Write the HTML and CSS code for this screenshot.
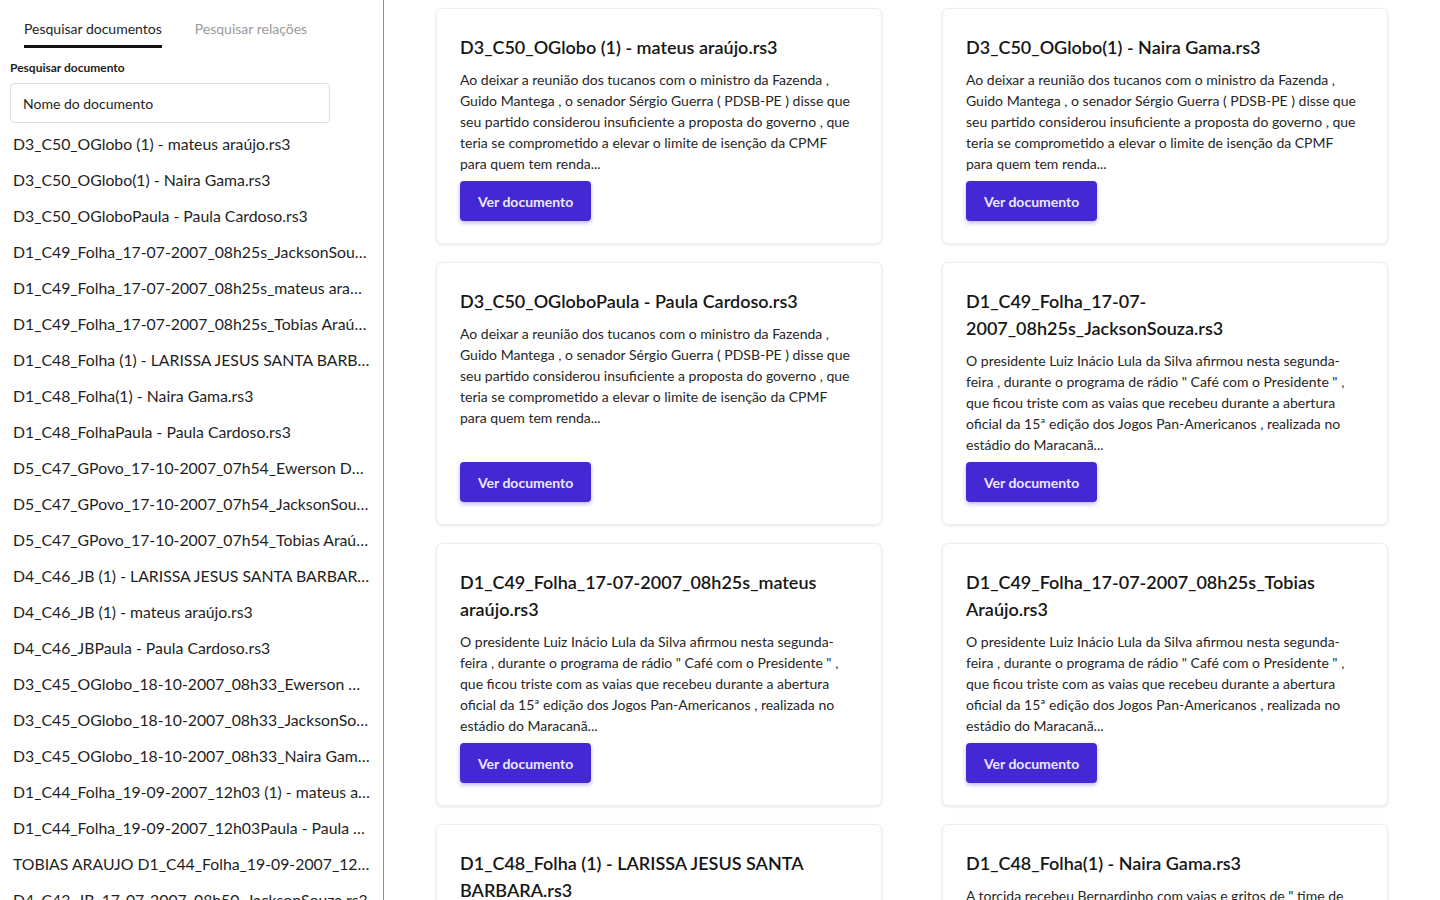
FILE: index.html
```html
<!DOCTYPE html>
<html lang="pt-BR">
<head>
    <meta charset="UTF-8">
    <meta name="viewport" content="width=device-width, initial-scale=1.0">
    <title>Documentos</title>
    <link rel="stylesheet" href="styles.css">
</head>
<body>

<aside class="sidebar">
    <div class="tabs">
        <span class="tab active">Pesquisar documentos</span>
        <span class="tab">Pesquisar relações</span>
    </div>

    <label class="search-label" for="doc-search">Pesquisar documento</label>
    <input class="search-input" id="doc-search" type="text" placeholder="Nome do documento">

    <ul class="doc-list">
        <li>D3_C50_OGlobo (1) - mateus araújo.rs3</li>
        <li>D3_C50_OGlobo(1) - Naira Gama.rs3</li>
        <li>D3_C50_OGloboPaula - Paula Cardoso.rs3</li>
        <li>D1_C49_Folha_17-07-2007_08h25s_JacksonSouza.rs3</li>
        <li>D1_C49_Folha_17-07-2007_08h25s_mateus araújo.rs3</li>
        <li>D1_C49_Folha_17-07-2007_08h25s_Tobias Araújo.rs3</li>
        <li>D1_C48_Folha (1) - LARISSA JESUS SANTA BARBARA.rs3</li>
        <li>D1_C48_Folha(1) - Naira Gama.rs3</li>
        <li>D1_C48_FolhaPaula - Paula Cardoso.rs3</li>
        <li>D5_C47_GPovo_17-10-2007_07h54_Ewerson Dantas.rs3</li>
        <li>D5_C47_GPovo_17-10-2007_07h54_JacksonSouza.rs3</li>
        <li>D5_C47_GPovo_17-10-2007_07h54_Tobias Araújo.rs3</li>
        <li>D4_C46_JB (1) - LARISSA JESUS SANTA BARBARA.rs3</li>
        <li>D4_C46_JB (1) - mateus araújo.rs3</li>
        <li>D4_C46_JBPaula - Paula Cardoso.rs3</li>
        <li>D3_C45_OGlobo_18-10-2007_08h33_Ewerson Dantas.rs3</li>
        <li>D3_C45_OGlobo_18-10-2007_08h33_JacksonSouza.rs3</li>
        <li>D3_C45_OGlobo_18-10-2007_08h33_Naira Gama.rs3</li>
        <li>D1_C44_Folha_19-09-2007_12h03 (1) - mateus araújo.rs3</li>
        <li>D1_C44_Folha_19-09-2007_12h03Paula - Paula Cardoso.rs3</li>
        <li>TOBIAS ARAUJO D1_C44_Folha_19-09-2007_12h03.rs3</li>
        <li>D4_C43_JB_17-07-2007_08h50_JacksonSouza.rs3</li>
    </ul>
</aside>

<main class="content">
    <div class="card-grid">
        <div class="card">
            <h3>D3_C50_OGlobo (1) - mateus araújo.rs3</h3>
            <p>Ao deixar a reunião dos tucanos com o ministro da Fazenda , Guido Mantega , o senador Sérgio Guerra ( PDSB-PE ) disse que seu partido considerou insuficiente a proposta do governo , que teria se comprometido a elevar o limite de isenção da CPMF para quem tem renda...</p>
            <button class="btn">Ver documento</button>
        </div>
        <div class="card">
            <h3>D3_C50_OGlobo(1) - Naira Gama.rs3</h3>
            <p>Ao deixar a reunião dos tucanos com o ministro da Fazenda , Guido Mantega , o senador Sérgio Guerra ( PDSB-PE ) disse que seu partido considerou insuficiente a proposta do governo , que teria se comprometido a elevar o limite de isenção da CPMF para quem tem renda...</p>
            <button class="btn">Ver documento</button>
        </div>
        <div class="card">
            <h3>D3_C50_OGloboPaula - Paula Cardoso.rs3</h3>
            <p>Ao deixar a reunião dos tucanos com o ministro da Fazenda , Guido Mantega , o senador Sérgio Guerra ( PDSB-PE ) disse que seu partido considerou insuficiente a proposta do governo , que teria se comprometido a elevar o limite de isenção da CPMF para quem tem renda...</p>
            <button class="btn">Ver documento</button>
        </div>
        <div class="card">
            <h3>D1_C49_Folha_17-07-2007_08h25s_JacksonSouza.rs3</h3>
            <p>O presidente Luiz Inácio Lula da Silva afirmou nesta segunda-feira , durante o programa de rádio " Café com o Presidente " , que ficou triste com as vaias que recebeu durante a abertura oficial da 15ª edição dos Jogos Pan-Americanos , realizada no estádio do Maracanã...</p>
            <button class="btn">Ver documento</button>
        </div>
        <div class="card">
            <h3>D1_C49_Folha_17-07-2007_08h25s_mateus araújo.rs3</h3>
            <p>O presidente Luiz Inácio Lula da Silva afirmou nesta segunda-feira , durante o programa de rádio " Café com o Presidente " , que ficou triste com as vaias que recebeu durante a abertura oficial da 15ª edição dos Jogos Pan-Americanos , realizada no estádio do Maracanã...</p>
            <button class="btn">Ver documento</button>
        </div>
        <div class="card">
            <h3>D1_C49_Folha_17-07-2007_08h25s_Tobias Araújo.rs3</h3>
            <p>O presidente Luiz Inácio Lula da Silva afirmou nesta segunda-feira , durante o programa de rádio " Café com o Presidente " , que ficou triste com as vaias que recebeu durante a abertura oficial da 15ª edição dos Jogos Pan-Americanos , realizada no estádio do Maracanã...</p>
            <button class="btn">Ver documento</button>
        </div>
        <div class="card">
            <h3>D1_C48_Folha (1) - LARISSA JESUS SANTA BARBARA.rs3</h3>
            <p>A torcida recebeu Bernardinho com vaias e gritos de " time de m... " durante a apresentação da seleção masculina de vôlei...</p>
            <button class="btn">Ver documento</button>
        </div>
        <div class="card">
            <h3>D1_C48_Folha(1) - Naira Gama.rs3</h3>
            <p>A torcida recebeu Bernardinho com vaias e gritos de " time de m... " durante a apresentação da seleção masculina de vôlei...</p>
            <button class="btn">Ver documento</button>
        </div>
    </div>
</main>

</body>
</html>
```

FILE: styles.css
```css
body {
    font-family: Lato, "Noto Sans", sans-serif;
    margin: 0;
    display: flex;
    align-items: flex-start;
    background: #fff;
    color: #1e1e1e;
}

/* left column with tabs, search box and the document names */
.sidebar {
    width: 363px;
    flex-shrink: 0;
    padding: 8px 10px 0 10px;
    border-right: 1px solid #22c1b1;
    min-height: 100vh;
}
.tabs {
    display: flex;
}
.tab {
    font-size: 14px;
    margin: 0 16px 0 14px;
    padding: 12px 0 8px;
    color: #9a9a9a;
    border-bottom: 3px solid transparent;
    cursor: pointer;
}
.tab.active {
    color: #1e1e1e;
    border-bottom-color: #111;
}
.tab + .tab {
    margin-left: 17px;
}
.search-label {
    display: block;
    font-size: 12px;
    font-weight: bold;
    margin-top: 12px;
}
.search-input {
    display: block;
    box-sizing: border-box;
    width: 320px;
    height: 40px;
    margin-top: 8px;
    padding: 0 12px;
    font-family: inherit;
    font-size: 14px;
    border: 1px solid #ddd;
    border-radius: 4px;
    outline: none;
}
.search-input::placeholder {
    color: #1e1e1e;
}
.doc-list {
    list-style: none;
    margin: 3px 0 0;
    padding: 0;
}
.doc-list li {
    font-size: 15.8px;
    line-height: 24px;
    padding: 6px 3px;
    white-space: nowrap;
    overflow: hidden;
    text-overflow: ellipsis;
    cursor: pointer;
}

/* document cards */
.content {
    flex: 1;
    padding: 8px 52px;
}
.card-grid {
    display: grid;
    grid-template-columns: 1fr 1fr;
    gap: 18px 60px;
}
.card {
    display: flex;
    flex-direction: column;
    align-items: flex-start;
    padding: 25px 25px 22px 23px;
    border: 1px solid #eee;
    border-radius: 6px;
    box-shadow: 0 1px 3px rgba(0, 0, 0, 0.1);
    background: #fff;
}
.card h3 {
    font-size: 18px;
    font-weight: 600;
    line-height: 27px;
    margin: 0 0 8px;
    color: #161616;
}
.card p {
    font-size: 14px;
    line-height: 21px;
    margin: 0 0 7px;
    color: #262626;
}
.btn {
    margin-top: auto;
    height: 40px;
    padding: 0 18px;
    font-family: inherit;
    font-size: 14px;
    font-weight: bold;
    color: #ece8ff;
    background: #4428d4;
    border: none;
    border-radius: 4px;
    box-shadow: 0 2px 4px rgba(68, 40, 212, 0.35);
    cursor: pointer;
}
.btn:hover {
    background: #3720b8;
}
```
